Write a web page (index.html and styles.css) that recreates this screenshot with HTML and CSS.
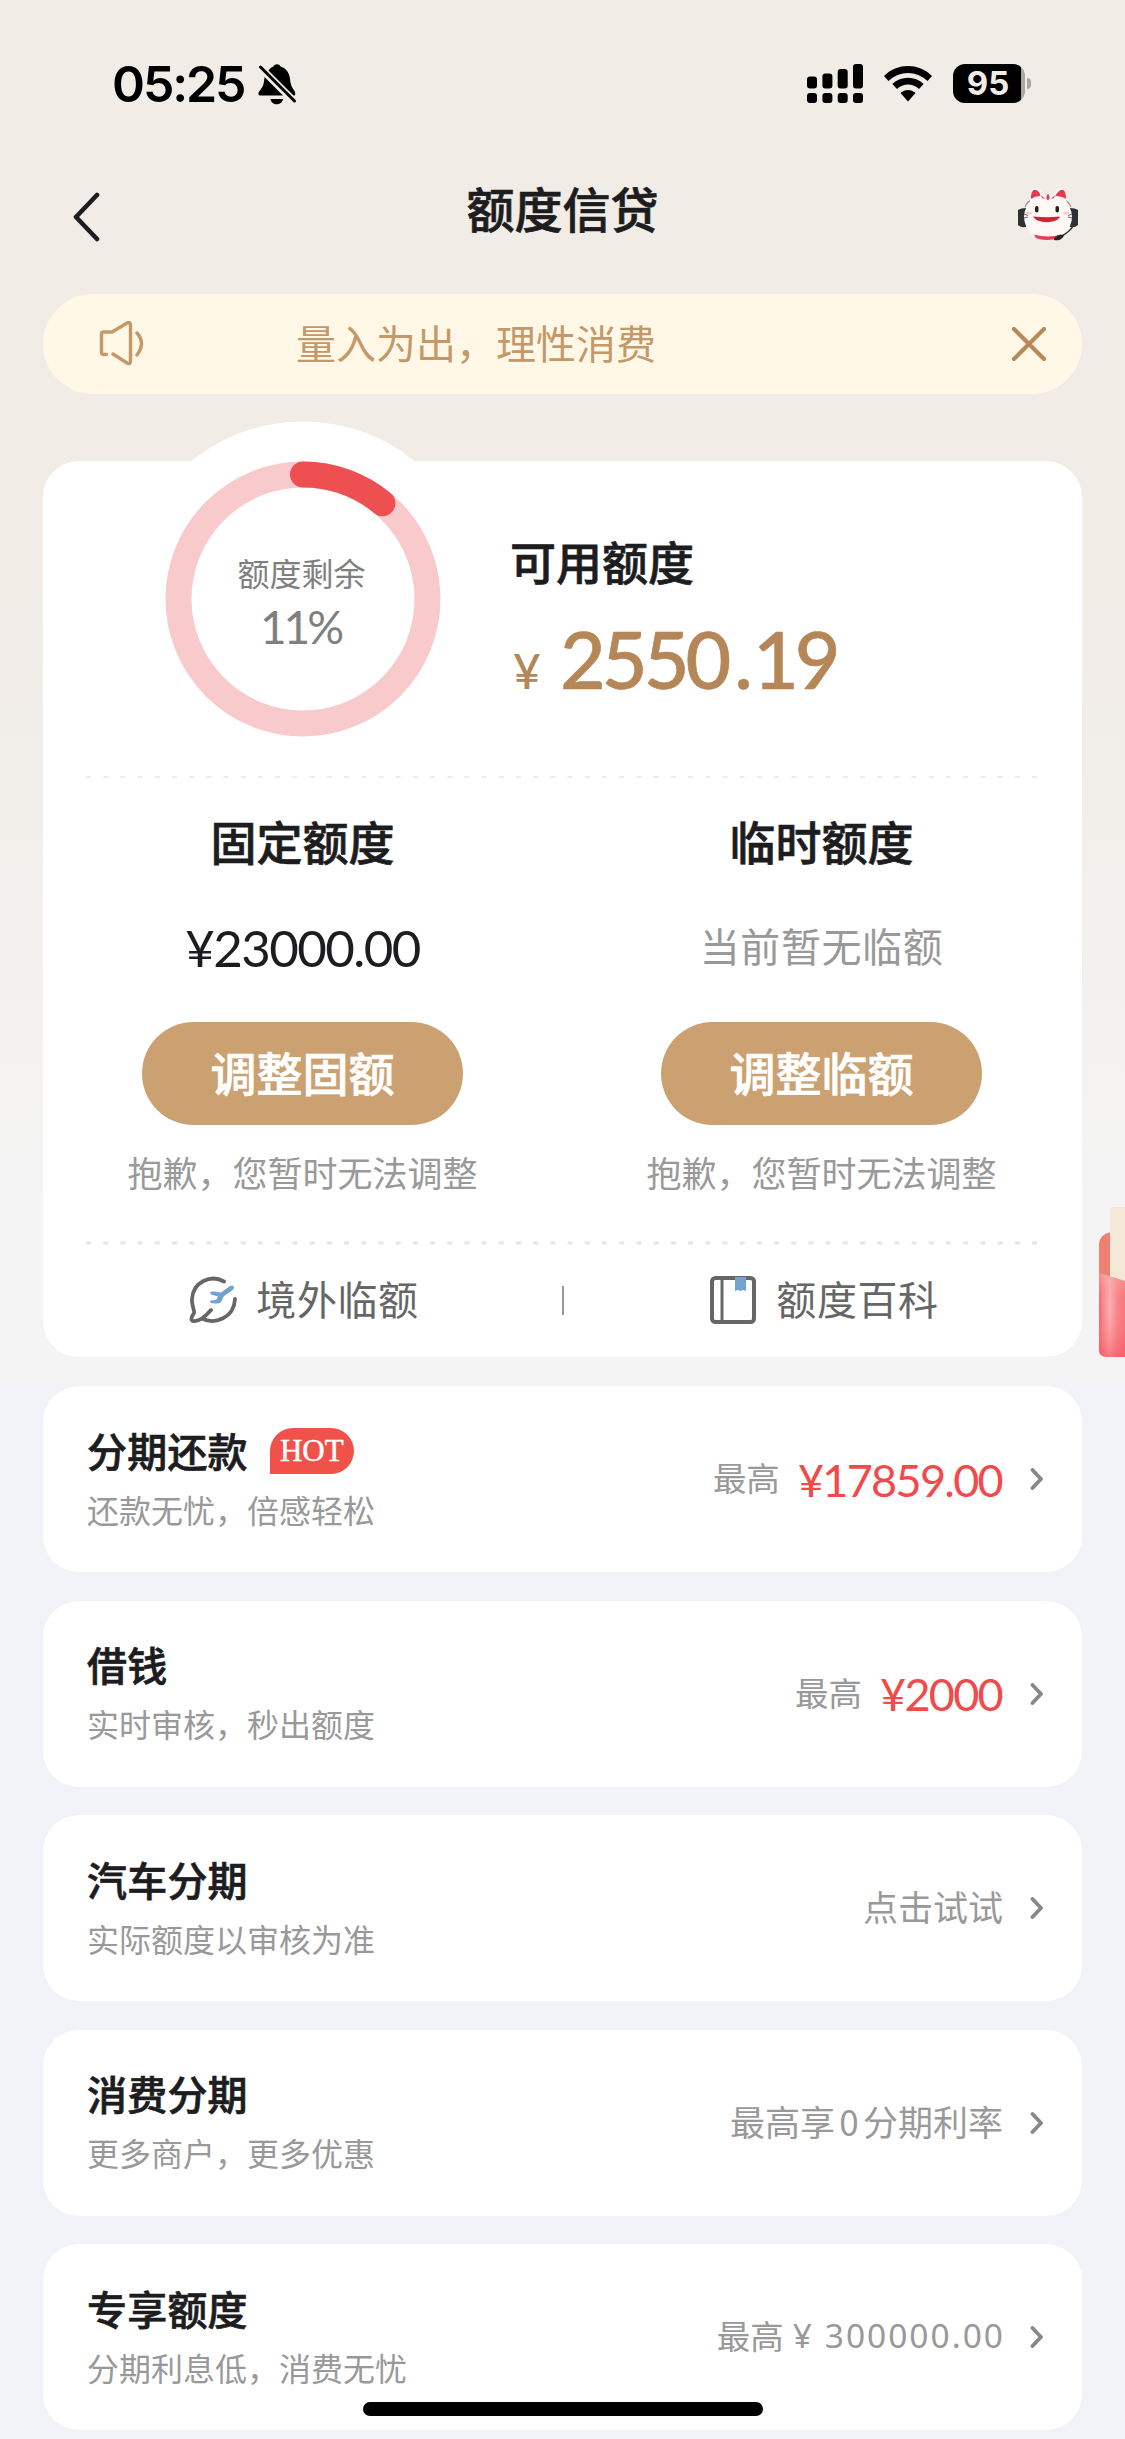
FILE: index.html
```html
<!DOCTYPE html>
<html lang="zh-CN">
<head>
<meta charset="utf-8">
<title>额度信贷</title>
<link rel="stylesheet" href="styles.css">
</head>
<body>
<div class="page">
  <header class="status">
    <div class="status-left">
      <span class="time">05:25</span>
      <svg class="bell" width="40" height="42" viewBox="0 0 40 42">
        <path d="M2 31.500 C0 31 0 29 1.500 27 C5 23 6 20 6.500 13 L25 31.500 Z M10.500 6.500 C12 4 14 3 15.500 2.500 C16.500 -.5 21.500 -.5 22.500 2.500 C28 4 31.500 9 32 15 C32.300 20 34 24 36.500 27 C37.500 29 37.500 30.500 36.500 31.500 L35.500 31.500 Z M12.500 35 H25 C24 42 13.500 42 12.500 35 Z"/>
        <path d="M2.500 3 L36.500 37" class="bell-slash"/>
      </svg>
    </div>
    <div class="status-right">
      <svg width="56" height="40" viewBox="0 0 56 40">
        <rect x="0" y="12.500" width="10" height="12" rx="3"/><rect x="15.400" y="9.500" width="10" height="15" rx="3"/><rect x="30.700" y="5" width="10" height="19.500" rx="3"/><rect x="46" y="0" width="10" height="24.500" rx="3"/>
        <rect x="0" y="29" width="10" height="10" rx="3"/><rect x="15.400" y="29" width="10" height="10" rx="3"/><rect x="30.700" y="29" width="10" height="10" rx="3"/><rect x="46" y="29" width="10" height="10" rx="3"/>
      </svg>
      <svg class="wifi" width="48" height="36" viewBox="0 0 48 36">
        <path d="M0 10 C13 -3.300 35 -3.300 48 10 L43.500 15 C32.500 4.300 15.500 4.300 4.500 15 Z M8.300 18 C17 9.500 31 9.500 39.700 18 L35 23 C29 17 19 17 13 23 Z M16.500 27 C21 23 27 23 31.500 27 L24 35.500 Z"/>
      </svg>
      <div class="battery"><span>95</span></div>
      <i class="battery-tip"></i>
    </div>
  </header>

  <nav class="nav">
    <svg class="back" width="28" height="50" viewBox="0 0 28 50"><path d="M25 3 L4 25 L25 47"/></svg>
    <h1>额度信贷</h1>
    <svg class="service" width="62" height="56" viewBox="0 0 62 56">
      <path d="M8 21 C12 7 50 7 54 21" fill="none" stroke="#999" stroke-width="1.200"/>
      <path d="M13 18 C13 7 15 1 19 2 C23 3 26 7 27 9 H37 C39 4 42 1 45 2 C48 4 49 12 50 18 Z" fill="#fdf7f6"/>
      <path d="M14 12 C14 6 16 3 19 4 C22 5 24 9 23 10 Q18 10 14 13 Z M49 13 C49 6 47 3 44 4 C41 5 39 9 38 10 Q45 10 49 13 Z" fill="#e8384f"/>
      <path d="M1 24 Q4 22 9 22 V41 Q4 42 1 39 Z M61 24 Q58 22 53 22 V41 Q58 42 61 39 Z" fill="#303033"/>
      <ellipse cx="31" cy="31" rx="24" ry="22.500" fill="#fdf7f6"/>
      <path d="M17 48.500 C25 51 37 51 44 48.500 L42 52 C35 54.500 25 54.500 19 52 Z" fill="#e3405a"/>
      <path d="M31 8 C34 11 32 14 31 14 C30 14 28 11 31 8 Z M24 9 L28 13 L25 12 Z M38 9 L34 13 L37 12 Z" fill="#e8384f"/>
      <rect x="18" y="20" width="3.500" height="6.500" rx="1.700" fill="#222"/><rect x="38.500" y="20" width="3.500" height="6.500" rx="1.700" fill="#222"/>
      <ellipse cx="12" cy="27" rx="3" ry="1.500" fill="#f8cccf"/><ellipse cx="49" cy="27" rx="3" ry="1.500" fill="#f8cccf"/>
      <path d="M16 30.500 Q30 32 43 30.500 C40 38 20 38 16 30.500 Z" fill="#d9202c"/>
      <path d="M7 28 L11 29.500 M7 32 L11 31 M55 28 L51 29.500 M55 32 L51 31" stroke="#666" stroke-width="1"/>
      <path d="M56 40 C54 44 50 47 45 50" fill="none" stroke="#333" stroke-width="1.500"/>
      <path d="M37 54 C37 50 43 48 47 49 C46 53 42 55 37 54 Z" fill="#242426"/>
    </svg>
  </nav>

  <section class="notice">
    <svg width="48" height="46" viewBox="0 0 48 46"><path d="M7.500 33.500 H4.500 C3 33.500 2.500 33 2.500 31.500 V13 C2.500 11.500 3 11 4.500 11 H13 L28 2 Q31.500 .5 31.500 4 V40 Q31.500 44 28 42 L14 33 M38 12 Q47 22 38 34"/></svg>
    <p>量入为出，理性消费</p>
    <svg width="34" height="34" viewBox="0 0 34 34" class="close"><path d="M2 2 L32 32 M32 2 L2 32"/></svg>
  </section>

  <section class="card">
    <div class="summary">
      <div class="gauge">
        <svg class="gauge-ring" width="356" height="356" viewBox="0 0 356 356">
          <circle cx="178" cy="178" r="177.500" fill="#fff"/>
          <circle cx="178" cy="178" r="124.500" fill="none" stroke="#f9cacb" stroke-width="26"/>
          <path d="M178 53.500 A124.500 124.500 0 0 1 257.500 82.200" fill="none" stroke="#ee4f51" stroke-width="26" stroke-linecap="round"/>
        </svg>
        <div class="gauge-text"><span>额度剩余</span><b>11%</b></div>
      </div>
      <div class="available">
        <h2>可用额度</h2>
        <p><small>¥</small><span>2550<i>.</i>19</span></p>
      </div>
    </div>
    <svg class="dash thin" width="951" height="4" viewBox="0 0 951 4"><path d="M0 2 H951" stroke-width="2" stroke-dasharray="5 12.200"/></svg>
    <div class="limits">
      <div class="limit">
        <h2>固定额度</h2>
        <p class="amount">¥23000.00</p>
        <button>调整固额</button>
        <p class="tip">抱歉，您暂时无法调整</p>
      </div>
      <div class="limit">
        <h2>临时额度</h2>
        <p class="none">当前暂无临额</p>
        <button>调整临额</button>
        <p class="tip">抱歉，您暂时无法调整</p>
      </div>
    </div>
    <svg class="dash" width="951" height="4" viewBox="0 0 951 4"><path d="M0 2 H951" stroke-width="3" stroke-dasharray="5 12.200"/></svg>
    <div class="links">
      <a><svg width="48" height="50" viewBox="0 0 48 50">
        <path d="M35 6.500 C22 -1 4 7 3 24 C2.500 31 6 36 5 38 C3 41 1 45 4 46 C9 47 16 42 22 35 M13 43.500 C26 50 45 43 46 24" fill="none" stroke="#666" stroke-width="3.800" stroke-linecap="round"/>
        <path d="M21 17.500 Q22 16 25 16.500 L32 17.500 L41 11 Q45 9.500 45 13 Q44 15 42.500 16 L35 21 L32 27 Q30 29 26 28.500 L22 28 Q20 26.500 22 25.500 L27 25 L29 21.500 L22 19.500 Z" fill="#73a1d0"/>
      </svg><span>境外临额</span></a>
      <i class="divider"></i>
      <a><svg width="48" height="50" viewBox="0 0 48 50">
        <rect x="3" y="3" width="42" height="44" rx="3.500" fill="none" stroke="#666" stroke-width="4"/>
        <path d="M13 3 V47" stroke="#666" stroke-width="3"/>
        <path d="M26 2 H37 V16 L34 15 L31.500 16 L29 15 L26 16 Z" fill="#73a1d0"/>
      </svg><span>额度百科</span></a>
    </div>
  </section>

  <section class="list">
    <article class="item">
      <div class="item-text"><h3>分期还款<em>HOT</em></h3><p>还款无忧，倍感轻松</p></div>
      <div class="item-value"><span class="label">最高</span><b>¥17859.00</b></div>
      <svg class="arrow" width="14" height="22" viewBox="0 0 14 22"><path d="M2.500 2 L11 11 L2.500 20"/></svg>
    </article>
    <article class="item">
      <div class="item-text"><h3>借钱</h3><p>实时审核，秒出额度</p></div>
      <div class="item-value"><span class="label">最高</span><b>¥2000</b></div>
      <svg class="arrow" width="14" height="22" viewBox="0 0 14 22"><path d="M2.500 2 L11 11 L2.500 20"/></svg>
    </article>
    <article class="item">
      <div class="item-text"><h3>汽车分期</h3><p>实际额度以审核为准</p></div>
      <div class="item-value"><span>点击试试</span></div>
      <svg class="arrow" width="14" height="22" viewBox="0 0 14 22"><path d="M2.500 2 L11 11 L2.500 20"/></svg>
    </article>
    <article class="item">
      <div class="item-text"><h3>消费分期</h3><p>更多商户，更多优惠</p></div>
      <div class="item-value"><span>最高享</span><span class="zero">0</span><span>分期利率</span></div>
      <svg class="arrow" width="14" height="22" viewBox="0 0 14 22"><path d="M2.500 2 L11 11 L2.500 20"/></svg>
    </article>
    <article class="item">
      <div class="item-text"><h3>专享额度</h3><p>分期利息低，消费无忧</p></div>
      <div class="item-value"><span class="label">最高</span><span class="plain">¥ 300000.00</span></div>
      <svg class="arrow" width="14" height="22" viewBox="0 0 14 22"><path d="M2.500 2 L11 11 L2.500 20"/></svg>
    </article>
  </section>

  <svg class="packet" width="26" height="152" viewBox="0 0 26 152">
    <defs>
      <linearGradient id="front" x1="0" x2="1" y1="0" y2="0"><stop offset="0" stop-color="#f4636c"/><stop offset=".15" stop-color="#f7868c"/><stop offset=".42" stop-color="#fbb2b6"/><stop offset=".7" stop-color="#f9858b"/><stop offset="1" stop-color="#f8727b"/></linearGradient>
      <linearGradient id="shade" x1="0" x2="0" y1="0" y2="1"><stop offset="0" stop-color="#f9b0a8" stop-opacity=".6"/><stop offset=".4" stop-color="#f98a8a" stop-opacity="0"/><stop offset="1" stop-color="#f4505e" stop-opacity=".6"/></linearGradient>
    </defs>
    <path d="M0 80 V38 Q1 28 12 26 V90 Z" fill="#f08074"/>
    <path d="M11 85 V4 Q11 1 15 1 H26 V90 Z" fill="#f4e8d7"/>
    <path d="M0 67 Q14 71 26 75 V151 H8 Q0 151 0 144 Z" fill="url(#front)"/>
    <path d="M0 67 Q14 71 26 75 V151 H8 Q0 151 0 144 Z" fill="url(#shade)"/>
  </svg>
  <div class="home"></div>
</div>
</body>
</html>
```
FILE: styles.css
```css
* { box-sizing: border-box; margin: 0; padding: 0; }
body { font-family: "Noto Sans CJK SC", sans-serif; color: #1d1d1f; }
h1, h2, h3 { font-weight: 500; -webkit-text-stroke: .7px currentColor; }
svg { display: block; flex: none; }

.page {
  position: relative;
  width: 1125px;
  height: 2439px;
  overflow: hidden;
  background: linear-gradient(180deg, #f1ece6 0, #f1ece6 600px, #f4f4f4 1200px, #f4f4f4 1384px, #f2f3f8 1385px);
}

.status {
  height: 160px;
  padding: 64px 94px 0 112px;
  display: flex;
  justify-content: space-between;
  align-items: flex-start;
}
.status-left, .status-right { display: flex; align-items: flex-start; }
.time { width: 146px; font: 600 50px/40px Inter, sans-serif; color: #000; letter-spacing: -2.100px; white-space: nowrap; }
.bell-slash { fill: none; stroke: #000; stroke-width: 3; stroke-linecap: round; }
.wifi { margin: 2px 21px 0; }
.battery {
  width: 72px;
  height: 39px;
  border-radius: 12px;
  background: linear-gradient(90deg, #000 68px, #aaa6a2 68px);
}
.battery span { display: block; width: 70px; text-align: center; color: #f1ece6; font: 700 33px/39px Inter, sans-serif; }
.battery-tip { width: 4px; height: 11px; margin: 14px 0 0 2px; border-radius: 0 4px 4px 0; background: #aaa6a2; }

.nav {
  height: 134px;
  padding: 16px 46px 0 72px;
  display: grid;
  grid-template-columns: 62px 1fr 62px;
}
.nav h1 { margin: -2px 13px 0 -13px; text-align: center; font-size: 48px; line-height: 66px; }
.back { margin-top: 16px; fill: none; stroke: #1d1d1f; stroke-width: 4.600; }
.back path { stroke-linecap: round; stroke-linejoin: round; fill: none; }
.service { margin-top: 10px; }

.notice {
  width: 1039px;
  height: 100px;
  margin-left: 43px;
  padding: 0 36px 0 56px;
  border-radius: 50px;
  background: #fff8e7;
  display: flex;
  align-items: center;
  color: #c5986a;
}
.notice svg { fill: none; stroke: currentColor; stroke-width: 3.400; stroke-linecap: round; }
.notice p { flex: 1; padding-left: 149px; font-size: 40px; line-height: 60px; margin-top: -4px; }
.notice .close { stroke: #b98a59; stroke-width: 4.200; }

.card {
  width: 1039px;
  height: 896px;
  margin: 67px 0 29px 43px;
  border-radius: 36px;
  background: #fff;
}
.summary { height: 314px; display: flex; }
.gauge { position: relative; width: 467px; height: 275px; }
.gauge-ring { position: absolute; left: 82px; top: -40.500px; }
.gauge-text { position: absolute; left: 120px; top: 86px; width: 275px; text-align: center; color: #7f7f7f; }
.gauge-text span { display: block; padding-left: 2px; font-size: 32px; line-height: 50px; }
.gauge-text b { display: block; margin-top: 2px; font: 400 46px/56px Lato, sans-serif; letter-spacing: -3px; }
.available h2 { margin-top: 66px; font-size: 46px; line-height: 66px; }
.available p { display: flex; align-items: baseline; color: #b58657; font-family: Lato, sans-serif; margin-top: 18px; line-height: 96px; }
.available small { width: 50px; padding-left: 3px; font-size: 48px; font-weight: 500; }
.available span { font-size: 79px; font-weight: 500; letter-spacing: -4px; -webkit-text-stroke: .6px currentColor; }
.available i { margin: 0 4px 0 7px; font-style: normal; }

.dash { margin-left: 43px; }
.dash path { stroke: #e6e6e6; }
.dash.thin path { stroke: #ececec; }

.limits { height: 462px; display: flex; }
.limit { width: 519px; display: flex; flex-direction: column; align-items: center; }
.limit h2 { margin-top: 28px; font-size: 46px; line-height: 66px; }
.amount, .none { height: 66px; line-height: 66px; }
.amount { margin-top: 42px; font-family: Lato, sans-serif; font-size: 51px; letter-spacing: -1.600px; }
.none { margin-top: 39px; margin-bottom: 3px; font-size: 40px; letter-spacing: .6px; color: #999; }
.limit button {
  width: 321px;
  height: 103px;
  margin-top: 41px;
  border: 0;
  border-radius: 52px;
  background: #cca172;
  color: #fff;
  font: 500 46px/66px "Noto Sans CJK SC", sans-serif;
  padding-bottom: 5px;
  -webkit-text-stroke: .7px currentColor;
}
.tip { margin-top: 22px; font-size: 35px; line-height: 50px; color: #999; }

.links { height: 112px; margin-top: -1px; display: flex; justify-content: center; align-items: center; color: #666; }
.links a { width: 518px; padding-left: 3px; display: flex; align-items: center; justify-content: center; gap: 19px; font-size: 40px; line-height: 60px; letter-spacing: .6px; }
.links span { margin-top: -5px; }
.divider { width: 2px; height: 29px; background: #999; }

.list { display: grid; gap: 28.600px; margin-left: 43px; width: 1039px; }
.item {
  height: 186px;
  padding: 0 38px 0 44px;
  border-radius: 36px;
  background: #fff;
  display: flex;
  align-items: center;
}
.item-text { flex: 1; margin-top: -5px; }
.item h3 { display: flex; align-items: center; font-size: 40px; line-height: 60px; letter-spacing: .2px; }
.item h3 em {
  width: 84px;
  height: 46px;
  margin: 2px 0 0 22px;
  border-radius: 23px 23px 23px 0;
  background: #f0524a;
  color: #fff;
  text-align: center;
  font: 400 31px/46px "Liberation Serif", serif;
  letter-spacing: 0;
  -webkit-text-stroke: .5px currentColor;
}
.item-text p { margin-top: 4px; font-size: 32px; line-height: 50px; color: #999; }
.item-value { display: flex; align-items: center; color: #999; font-size: 35px; line-height: 50px; margin-right: 27px; }
.item-value span { margin-top: -4px; }
.item-value b { margin: 1px 1px 0 18px; font: 400 45px/50px Lato, sans-serif; letter-spacing: -1.700px; color: #f24a4a; }
.item-value .label { font-size: 33.500px; }
.item-value .zero { width: 28px; text-align: center; }
.item-value .plain { margin: -4px -2px 0 9px; font: 400 33.500px/50px "Noto Sans", sans-serif; letter-spacing: 2px; }
.arrow { fill: none; stroke: #888; stroke-width: 3.800; stroke-linecap: round; stroke-linejoin: round; }

.packet { position: absolute; right: 0; top: 1206px; }
.home { position: absolute; left: 363px; top: 2402px; width: 400px; height: 14px; border-radius: 7px; background: #000; }
```
